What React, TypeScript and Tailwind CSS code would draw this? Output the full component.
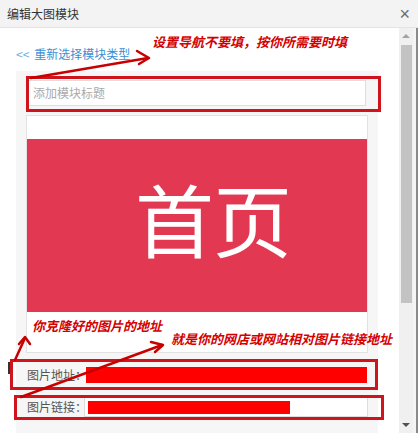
import React from 'react';

const cjk = { fontFamily: '"Noto Sans CJK SC", "Liberation Sans", sans-serif' };

function Annotations() {
  return (
    <div className="pointer-events-none absolute inset-0">
      {/* red highlight boxes */}
      <div className="absolute left-[26px] top-[76px] h-[36px] w-[355px] border-[3px] border-[#d0141c]" />
      <div className="absolute left-[10px] top-[359px] h-[31px] w-[368px] border-[3px] border-[#d0141c]" />
      <div className="absolute left-[14px] top-[395px] h-[25px] w-[370px] border-[3px] border-[#d0141c]" />
      <div className="absolute left-[8px] top-[362px] h-[12px] w-[2px] bg-[#333]" />

      {/* notes */}
      <div className="absolute left-[152px] top-[34px] text-[13px] font-bold italic leading-[16px] text-[#d40000]">
        设置导航不要填，按你所需要时填
      </div>
      <div className="absolute left-[32px] top-[318px] text-[13px] font-bold italic leading-[16px] text-[#d40000]">
        你克隆好的图片的地址
      </div>
      <div className="absolute left-[171px] top-[331px] text-[13px] font-bold italic leading-[16px] text-[#d40000]">
        就是你的网店或网站相对图片链接地址
      </div>

      <svg className="absolute left-0 top-0" width="418" height="433" viewBox="0 0 418 433" fill="none">
        <g stroke="#c80000" strokeWidth="2.5" strokeLinecap="round" strokeLinejoin="round">
          <line x1="31" y1="78" x2="148" y2="58" />
          <polyline points="137,51 149,58 139,64" />
          <line x1="15" y1="360" x2="25" y2="338" />
          <polyline points="19,344 25,337 30,344" />
          <line x1="21" y1="397" x2="162" y2="345" />
          <polyline points="151,342 163,345 155,352" />
        </g>
      </svg>
    </div>
  );
}

function Scrollbar() {
  return (
    <div className="flex w-[19px] shrink-0">
      <div className="flex w-[14px] flex-col items-center bg-[#f0f0f0] pt-[2px]">
        <div className="mt-[4px] h-0 w-0 border-x-[4px] border-b-[4px] border-x-transparent border-b-[#a3a3a3]" />
        <div className="mt-[7px] h-[258px] w-[11px] bg-[#c3c3c3]" />
        <div className="flex-1" />
        <div className="mb-[6px] h-0 w-0 border-x-[4px] border-t-[4px] border-x-transparent border-t-[#505050]" />
      </div>
      <div className="w-[3px] bg-[#f4f4f4]" />
      <div className="w-[2px] bg-[#8a8a8a]" />
    </div>
  );
}

export default function App() {
  return (
    <div className="relative flex h-[433px] w-[418px] flex-col overflow-hidden bg-white" style={cjk}>
      <div className="flex h-[28px] shrink-0 items-center justify-between border-b border-[#e3e3e3] bg-[#f3f3f3] pl-[7px] pr-[8px]">
        <span className="text-[12px] text-[#333]">编辑大图模块</span>
        <span className="text-[18px] leading-none text-[#6a6a6a]" style={{ fontFamily: '"Liberation Sans", sans-serif' }}>
          ×
        </span>
      </div>

      <div className="flex min-h-0 flex-1">
        <div className="min-w-0 flex-1 pt-[19px]">
          <div className="flex h-[14px] items-center pl-[16px] text-[12px]">
            <span className="text-[#6aaee0]">&lt;&lt;</span>
            <span className="ml-[5px] text-[#3a8fd2]">重新选择模块类型</span>
          </div>

          <div className="ml-[16px] mt-[10px] w-[362px] bg-[#f6f6f6] px-[10px] pb-[20px] pt-[9px]">
            <div className="ml-[1px] flex h-[26px] w-[339px] items-center border border-[#dedede] bg-white pl-[5px] text-[12px] text-[#aaa]">
              添加模块标题
            </div>

            <div className="mt-[9px] h-[238px] w-[342px] border border-[#e2e2e2] bg-white pt-[23px]">
              <div className="flex h-[173px] items-center bg-[#e33851] pb-[16px] pl-[108px]">
                <span className="text-[79px] font-normal leading-none tracking-[-1px] text-white">首页</span>
              </div>
            </div>

            <div className="mt-[8px] flex h-[28px] items-center pl-[1px] text-[12px] text-[#555]">
              <span className="w-[59px] shrink-0 whitespace-nowrap">图片地址：</span>
              <div className="h-[16px] w-[281px] bg-[#ff0000]" />
            </div>

            <div className="mt-[6px] flex h-[24px] items-center pl-[1px] text-[12px] text-[#555]">
              <span className="w-[57px] shrink-0 whitespace-nowrap">图片链接：</span>
              <div className="flex h-[20px] w-[294px] items-center border border-[#dcdcdc] bg-white pl-[3px]">
                <div className="h-[13px] w-[202px] bg-[#ff0000]" />
              </div>
            </div>
          </div>
        </div>
        <Scrollbar />
      </div>

      <Annotations />
    </div>
  );
}
